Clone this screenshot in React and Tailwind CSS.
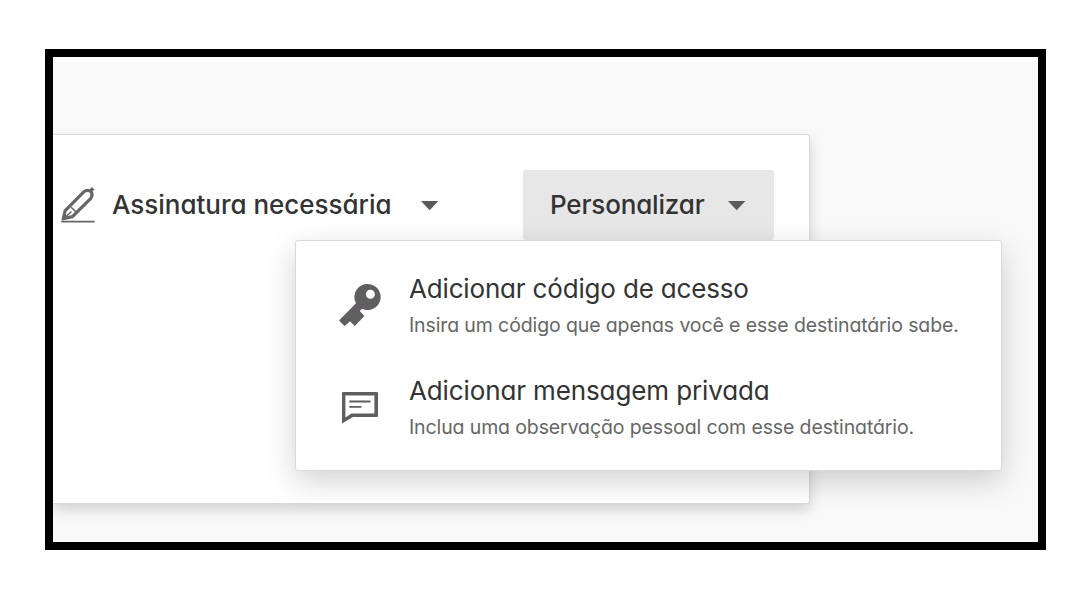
const MENU_ITEMS = [
  {
    title: "Adicionar código de acesso",
    description: "Insira um código que apenas você e esse destinatário sabe.",
    icon: KeyIcon,
    titleClass: "tracking-[-0.17px]",
  },
  {
    title: "Adicionar mensagem privada",
    description: "Inclua uma observação pessoal com esse destinatário.",
    icon: MessageIcon,
    titleClass: "tracking-[-0.12px]",
  },
];

function PenIcon() {
  return (
    <svg width="36" height="38" viewBox="0 0 36 38" fill="none">
      <path
        d="M3.2 32.8 5.2 24.6 23.8 5.8Q27.6 2.9 30.9 5.6Q33.4 9 30.6 12.6L12.4 30.6Z"
        stroke="#666"
        strokeWidth="3.2"
        strokeLinejoin="round"
      />
      <path d="M30 5.5 33.2 2.3" stroke="#666" strokeWidth="3.6" />
      <path d="M11.2 21.2 16 26" stroke="#666" strokeWidth="1.6" />
      <path d="M3 33 11.5 25.5" stroke="#666" strokeWidth="1.6" />
      <path d="M2 34 3.8 27.5 9.5 31.5Z" fill="#666" />
      <path d="M1.2 35.6H34.6" stroke="#666" strokeWidth="1.7" />
    </svg>
  );
}

function KeyIcon() {
  return (
    <svg width="42" height="42" viewBox="0 0 42 42" fill="#605e60">
      <path
        fillRule="evenodd"
        d="M29 0a13 13 0 1 1-6 24.7L20.8 27 25.4 32 15.8 42 11 37.2 5.6 42 0 36.4 17 19.2A13 13 0 0 1 29 0ZM31.4 5.8a4.5 4.5 0 1 0 0 9 4.5 4.5 0 0 0 0-9Z"
      />
    </svg>
  );
}

function MessageIcon() {
  return (
    <svg width="36" height="32" viewBox="0 0 36 32" fill="none" className="mt-[2px]">
      <path
        fill="#605e60"
        fillRule="evenodd"
        d="M1 0H35Q36 0 36 1V24Q36 25 35 25H11L0 31.5V1Q0 0 1 0ZM3.4 3.4V25.5L9.5 21.6H32.4V3.4Z"
      />
      <path d="M7.3 9.5H28.5M7.3 14.9H19.5" stroke="#605e60" strokeWidth="1.9" />
    </svg>
  );
}

function Caret() {
  return (
    <svg width="18" height="10" viewBox="0 0 18 10" fill="#5a595b" className="mt-[2px]">
      <path d="M0 0H17.4L8.7 9.2Z" />
    </svg>
  );
}

function CustomizeMenu() {
  return (
    <div className="absolute top-[105px] left-[242px] flex h-[231px] w-[707px] flex-col gap-[38px] rounded-[3px] border border-[#d9d9d9] bg-white pt-8 pl-[43px] shadow-[0_10px_30px_rgba(0,0,0,0.18)]">
      {MENU_ITEMS.map(({ title, description, icon: Icon, titleClass }) => (
        <div key={title} className="flex h-16">
          <div className="mt-[11px] flex h-[42px] w-[42px] shrink-0 items-center justify-center">
            <Icon />
          </div>
          <div className="ml-7 whitespace-nowrap">
            <div className={`h-8 text-[26px] leading-8 font-[370] text-[#333] ${titleClass}`}>{title}</div>
            <div className="mt-2 h-6 text-[19.5px] leading-6 font-[370] tracking-[-0.12px] text-[#666]">
              {description}
            </div>
          </div>
        </div>
      ))}
    </div>
  );
}

export default function App() {
  return (
    <div className="h-[598px] w-[1086px] bg-white pt-[49px] pl-[45px] font-['Inter',sans-serif] [font-feature-settings:'cv11']">
      <div className="h-[501px] w-[1001px] overflow-hidden border-8 border-black bg-white pt-[5px]">
        <div className="h-full bg-[#f9f9f9] pt-[72px]">
          <div className="relative h-[370px] w-[757px] rounded-r-[3px] border-y border-r border-[#d9d9d9] bg-white pt-[35px] shadow-[0_6px_14px_rgba(0,0,0,0.16)]">
            <div className="flex h-[70px] items-center whitespace-nowrap text-[26px] font-medium text-[#333]">
              <div className="ml-[7px] flex w-[463px] items-center">
                <PenIcon />
                <span className="-mt-[2px] ml-[16px] w-[309px] tracking-[-0.02px]">Assinatura necessária</span>
                <Caret />
              </div>
              <button className="flex h-[70px] w-[251px] items-center rounded-[3px] bg-[#e7e7e7] pl-[27px]">
                <span className="-mt-[2px] w-[178px] text-left tracking-[-0.17px]">Personalizar</span>
                <Caret />
              </button>
            </div>
            <CustomizeMenu />
          </div>
        </div>
      </div>
    </div>
  );
}
